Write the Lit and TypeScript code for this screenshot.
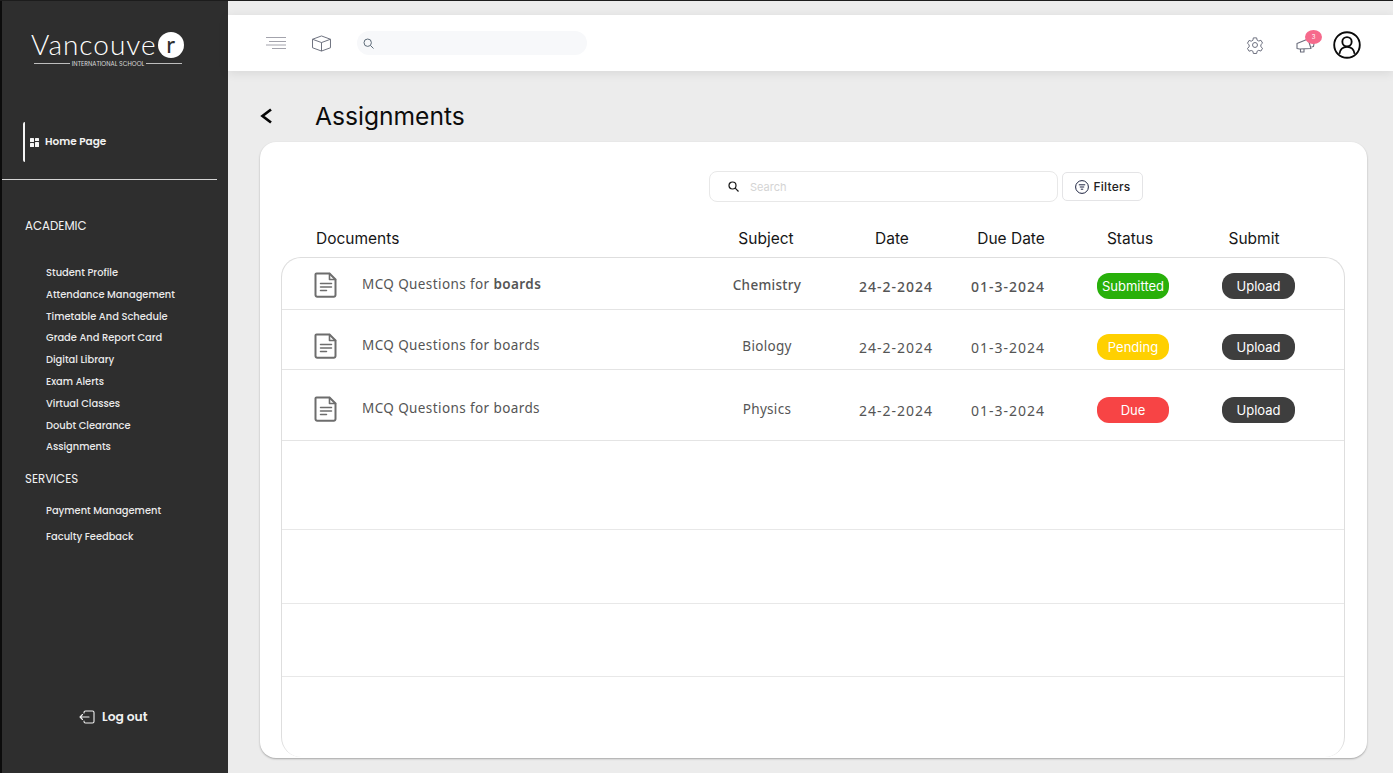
import { LitElement, html, css, svg } from "lit";
import { customElement } from "lit/decorators.js";

const academic = [
  "Student Profile",
  "Attendance Management",
  "Timetable And Schedule",
  "Grade And Report Card",
  "Digital Library",
  "Exam Alerts",
  "Virtual Classes",
  "Doubt Clearance",
  "Assignments",
];

// height is the row's height, shift moves its content down from the row's top
const rows = [
  { height: 52, shift: 0, subject: "Chemistry", status: "Submitted", tone: "green", strong: true },
  { height: 60, shift: 9, subject: "Biology", status: "Pending", tone: "yellow", strong: false },
  { height: 71, shift: 11.5, subject: "Physics", status: "Due", tone: "red", strong: false },
];
const emptyRows = [89, 74, 73, 81];

const docIcon = svg`<svg class="doc-icon" viewBox="0 0 24 26" fill="none" stroke="#6d6d6d" stroke-width="2" stroke-linejoin="round" stroke-linecap="round">
  <path d="M2.5 1.5h13l6 6v15.5a1.7 1.7 0 0 1-1.7 1.7H3.2A1.7 1.7 0 0 1 1.5 23V2.5a1 1 0 0 1 1-1z"/>
  <path d="M15.5 1.5v6h6" stroke-width="1.6"/>
  <path d="M6.5 11.5h11M6.5 15h11M6.5 18.5h6" stroke-width="1.5"/>
</svg>`;

@customElement("app-root")
export class AppRoot extends LitElement {
  static styles = css`
    :host {
      display: block;
      font-family: Inter, "Liberation Sans", sans-serif;
    }
    .shell {
      display: flex;
      width: 1393px;
      height: 773px;
      overflow: hidden;
      background: #ececec;
      border-top: 1px solid #1c1c1c;
      box-sizing: border-box;
    }
    .side {
      flex: none;
      width: 226px;
      border-left: 2px solid #0c0c0c;
      background: #2e2e2e;
      color: #f2f2f2;
      display: flex;
      flex-direction: column;
      font-family: Poppins, Inter, sans-serif;
    }
    .logo {
      margin: 30px 0 0 29px;
      width: 153px;
      height: 39px;
    }
    .brand {
      display: flex;
      align-items: center;
      height: 27px;
    }
    .brand span {
      font-family: Lato, sans-serif;
      font-weight: 300;
      font-size: 28px;
      letter-spacing: 1px;
      color: #fff;
      line-height: 27px;
    }
    .brand b {
      flex: none;
      width: 26px;
      height: 26px;
      margin-left: 1px;
      border-radius: 50%;
      background: #fff;
      color: #2e2e2e;
      font-family: Lato, sans-serif;
      font-weight: 400;
      font-size: 24px;
      line-height: 24px;
      text-align: center;
    }
    .tagline {
      display: flex;
      align-items: center;
      gap: 2px;
      margin: 2px 2px 0 3px;
      font-size: 6.2px;
      line-height: 7px;
      white-space: nowrap;
      color: #d8d8d8;
    }
    .tagline i {
      flex: 1;
      height: 1px;
      background: #bdbdbd;
    }
    .home {
      display: flex;
      align-items: center;
      gap: 6px;
      height: 40px;
      margin: 52px 0 0 21px;
      padding-left: 5px;
      border-left: 2px solid #f4f4f4;
      border-radius: 2px;
      font-size: 10.5px;
      font-weight: 600;
    }
    .home svg {
      width: 9px;
      height: 9px;
    }
    .rule {
      height: 1px;
      margin: 17px 11px 0 0;
      background: #d5d5d5;
    }
    .group {
      margin: 38px 0 0 23px;
      font-size: 11.8px;
      line-height: 16px;
    }
    .group.services {
      margin-top: 13px;
    }
    .items {
      list-style: none;
      margin: 28px 0 0 44px;
      padding: 0;
      font-size: 9.9px;
      font-weight: 500;
      line-height: 21.8px;
      color: #eaeaea;
    }
    .items.services {
      margin-top: 11px;
      line-height: 26px;
    }
    .logout {
      display: flex;
      align-items: center;
      gap: 7px;
      margin: auto 0 47px 77px;
      font-size: 12.3px;
      font-weight: 600;
    }
    .logout svg {
      width: 16px;
      height: 14px;
    }
    .main {
      flex: 1;
      min-width: 0;
      padding-top: 14px;
    }
    .top {
      display: flex;
      align-items: center;
      height: 56px;
      padding: 0 32px 0 38px;
      background: #fff;
      box-shadow: 0 2px 10px rgba(0, 0, 0, 0.09);
    }
    .menu {
      width: 20px;
      height: 14px;
    }
    .cube {
      width: 21px;
      height: 17px;
      margin-left: 25px;
    }
    .find {
      display: flex;
      align-items: center;
      width: 230px;
      height: 24px;
      margin-left: 25px;
      padding-left: 6px;
      box-sizing: border-box;
      border-radius: 12px;
      background: #f7f8fa;
    }
    .find svg {
      width: 11px;
      height: 11px;
    }
    .gear {
      width: 18px;
      height: 18px;
      margin: 4px 0 0 auto;
    }
    .bell {
      position: relative;
      width: 19px;
      height: 16px;
      margin: 4px 0 0 32px;
    }
    .bell svg {
      display: block;
      width: 19px;
      height: 16px;
    }
    .badge {
      position: absolute;
      left: 9px;
      top: -7px;
      width: 17px;
      height: 14px;
      border-radius: 50%;
      background: #f66a8c;
      color: #fff;
      font-size: 6px;
      line-height: 14px;
      text-align: center;
    }
    .avatar {
      width: 28px;
      height: 28px;
      margin: 4px 0 0 18px;
    }
    .title {
      display: flex;
      align-items: center;
      height: 34px;
      margin: 28px 0 0 32px;
      font-size: 24.6px;
      color: #0c0c0c;
    }
    .title svg {
      flex: none;
      width: 13px;
      height: 16px;
      margin-right: 42px;
    }
    .card {
      width: 1107px;
      height: 616px;
      margin: 9px 0 0 32px;
      padding-top: 29px;
      box-sizing: border-box;
      border-radius: 16px;
      background: #fff;
      box-shadow: 0 1px 2px rgba(0, 0, 0, 0.3);
    }
    .tools {
      display: flex;
      align-items: center;
      gap: 4px;
      margin-left: 449px;
    }
    .search {
      display: flex;
      align-items: center;
      gap: 11px;
      width: 349px;
      height: 31px;
      padding-left: 18px;
      box-sizing: border-box;
      border: 1px solid #e8e8e8;
      border-radius: 8px;
      font-size: 11px;
      color: #d4d4d4;
    }
    .search svg {
      width: 11px;
      height: 11px;
    }
    .filters {
      display: flex;
      align-items: center;
      justify-content: center;
      gap: 5px;
      width: 81px;
      height: 29px;
      box-sizing: border-box;
      border: 1px solid #e4e4e6;
      border-radius: 5px;
      font-size: 12px;
      font-weight: 500;
      letter-spacing: 0.2px;
      color: #222;
    }
    .filters svg {
      width: 14px;
      height: 14px;
    }
    .heads {
      display: grid;
      grid-template-columns: 419px 132px 120px 118px 120px 128px;
      align-items: center;
      height: 24px;
      margin: 24px 0 7px 21px;
      font-size: 15.5px;
      color: #161616;
      text-align: center;
    }
    .heads span:first-child {
      padding-left: 35px;
      text-align: left;
    }
    .table {
      height: 500px;
      margin: 0 22px 0 21px;
      overflow: hidden;
      box-sizing: border-box;
      border: 1px solid #dedede;
      border-bottom: 0;
      border-radius: 20px;
    }
    .row {
      display: grid;
      grid-template-columns: 418px 134px 124px 100px 150px 101px;
      align-items: start;
      box-sizing: border-box;
      border-bottom: 1px solid #e4e4e4;
      font-family: "Noto Sans", sans-serif;
      font-size: 13.5px;
      color: #555;
      text-align: center;
    }
    .blank {
      box-sizing: border-box;
      border-bottom: 1px solid #e8e8e8;
    }
    .blank:last-child {
      border-bottom: 0;
    }
    .doc {
      display: flex;
      align-items: center;
      gap: 24px;
      height: 26px;
      padding-left: 32px;
      margin-top: 14px;
      text-align: left;
      letter-spacing: 0.4px;
    }
    .doc span {
      padding-bottom: 2px;
    }
    .doc-icon {
      flex: none;
      width: 24px;
      height: 26px;
    }
    .cell {
      margin-top: 14px;
      height: 26px;
      line-height: 26px;
      letter-spacing: 0.3px;
    }
    .date {
      margin-top: 16px;
      font-size: 14px;
      letter-spacing: 1px;
    }
    .strong .cell {
      font-weight: 500;
    }
    .doc b {
      font-weight: 600;
    }
    .pill {
      display: block;
      width: 72px;
      height: 26px;
      margin: 15px auto 0;
      border-radius: 12px;
      color: #fff;
      font-family: Inter, sans-serif;
      font-size: 13px;
      line-height: 27px;
      text-align: center;
    }
    .green {
      background: #28b00a;
    }
    .yellow {
      background: #ffd000;
    }
    .red {
      background: #f74445;
    }
    .dark {
      width: 73px;
      background: #3e3e3e;
    }
  `;

  render() {
    return html`
      <div class="shell">
        <aside class="side">
          <div class="logo">
            <div class="brand"><span>Vancouve</span><b>r</b></div>
            <div class="tagline"><i></i>INTERNATIONAL SCHOOL<i></i></div>
          </div>
          <div class="home">
            <svg viewBox="0 0 9 9" fill="#f4f4f4">
              <rect width="4" height="4" rx="0.5" />
              <rect x="5" width="4" height="3" rx="0.5" />
              <rect y="5" width="4" height="4" rx="0.5" />
              <rect x="5" y="4" width="4" height="5" rx="0.5" />
            </svg>
            Home Page
          </div>
          <div class="rule"></div>
          <div class="group">ACADEMIC</div>
          <ul class="items">
            ${academic.map((item) => html`<li>${item}</li>`)}
          </ul>
          <div class="group services">SERVICES</div>
          <ul class="items services">
            <li>Payment Management</li>
            <li>Faculty Feedback</li>
          </ul>
          <div class="logout">
            <svg viewBox="0 0 16 14" fill="none" stroke="#f2f2f2" stroke-width="1.1" stroke-linecap="round" stroke-linejoin="round">
              <path d="M5 3V2.5A1.5 1.5 0 0 1 6.5 1h7A1.5 1.5 0 0 1 15 2.500v9a1.500 1.500 0 0 1-1.500 1.500h-7A1.500 1.500 0 0 1 5 11.500V11" />
              <path d="M10 7H1M3.500 4.500 1 7l2.500 2.500" />
            </svg>
            Log out
          </div>
        </aside>

        <div class="main">
          <header class="top">
            <svg class="menu" viewBox="0 0 20 14" fill="none" stroke="#a3a3ac" stroke-width="1">
              <path d="M0 1.500h20M3 5.500h17M0 9h20M6 12.500h14" />
            </svg>
            <svg class="cube" viewBox="0 0 21 18" fill="none" stroke="#666a78" stroke-width="1" stroke-linejoin="round">
              <path d="M10.500 1 20 4.500v9L10.500 17 1 13.500v-9z" />
              <path d="M1 4.500 10.500 8 20 4.500M10.500 8v9" />
            </svg>
            <div class="find">
              <svg viewBox="0 0 11 11" fill="none" stroke="#5d6b78" stroke-width="1">
                <circle cx="4.700" cy="4.700" r="3.700" />
                <path d="m7.500 7.500 3 3" />
              </svg>
            </div>
            <svg class="gear" viewBox="0 0 24 24" fill="none" stroke="#6a6d7c" stroke-width="1.300" stroke-linejoin="round">
              <circle cx="12" cy="12" r="3.300" />
              <path d="M9.800 2.500h4.400l.6 3 2.200 1.200 2.900-1 2.200 3.800-2.300 2v2.800l2.300 2-2.200 3.800-2.900-1-2.200 1.200-.6 3H9.800l-.6-3L7 19.300l-2.900 1-2.200-3.800 2.300-2v-2.800l-2.300-2 2.200-3.800 2.900 1 2.200-1.200z" />
            </svg>
            <div class="bell">
              <svg viewBox="0 0 19 16" fill="none" stroke="#6a6d7c" stroke-width="1.100" stroke-linejoin="round">
                <path d="M1 6.500 12 2l3 9.500-11.500.5-2.500-.5z" />
                <path d="M4.500 12v3h3.500v-3M15 5.500l3 1-.5 3-2 .5" />
              </svg>
              <span class="badge">3</span>
            </div>
            <svg class="avatar" viewBox="0 0 30 30" fill="none" stroke="#0a0a0a" stroke-width="2">
              <circle cx="15" cy="15" r="13.700" />
              <circle cx="15" cy="11.500" r="5" />
              <path d="M6.800 24.500c.8-5 4-7.500 8.200-7.500s7.400 2.500 8.200 7.500" />
            </svg>
          </header>

          <div class="title">
            <svg viewBox="0 0 13 16" fill="none" stroke="#050505" stroke-width="2.700">
              <path d="M11 1.500 2.500 8 11 14.500" />
            </svg>
            Assignments
          </div>

          <section class="card">
            <div class="tools">
              <div class="search">
                <svg viewBox="0 0 11 11" fill="none" stroke="#161616" stroke-width="1.200">
                  <circle cx="4.500" cy="4.500" r="3.500" />
                  <path d="m7.200 7.200 3.300 3.300" />
                </svg>
                Search
              </div>
              <div class="filters">
                <svg viewBox="0 0 14 14" fill="none" stroke="#1d2340" stroke-width="1">
                  <circle cx="7" cy="7" r="6.400" />
                  <path d="M3.800 4.800h6.400M4.800 7h4.400M5.800 9.200h2.400" />
                </svg>
                Filters
              </div>
            </div>

            <div class="heads">
              <span>Documents</span><span>Subject</span><span>Date</span><span>Due Date</span><span>Status</span><span>Submit</span>
            </div>

            <div class="table">
              ${rows.map(
                (row) => html`
                  <div class="row ${row.strong ? "strong" : ""}" style="height:${row.height}px;padding-top:${row.shift}px">
                    <div class="doc">
                      ${docIcon}
                      <span>MCQ Questions for ${row.strong ? html`<b>boards</b>` : "boards"}</span>
                    </div>
                    <div class="cell">${row.subject}</div>
                    <div class="cell date">24-2-2024</div>
                    <div class="cell date">01-3-2024</div>
                    <div><span class="pill ${row.tone}">${row.status}</span></div>
                    <div><span class="pill dark">Upload</span></div>
                  </div>
                `
              )}
              ${emptyRows.map((h) => html`<div class="blank" style="height:${h}px"></div>`)}
            </div>
          </section>
        </div>
      </div>
    `;
  }
}
